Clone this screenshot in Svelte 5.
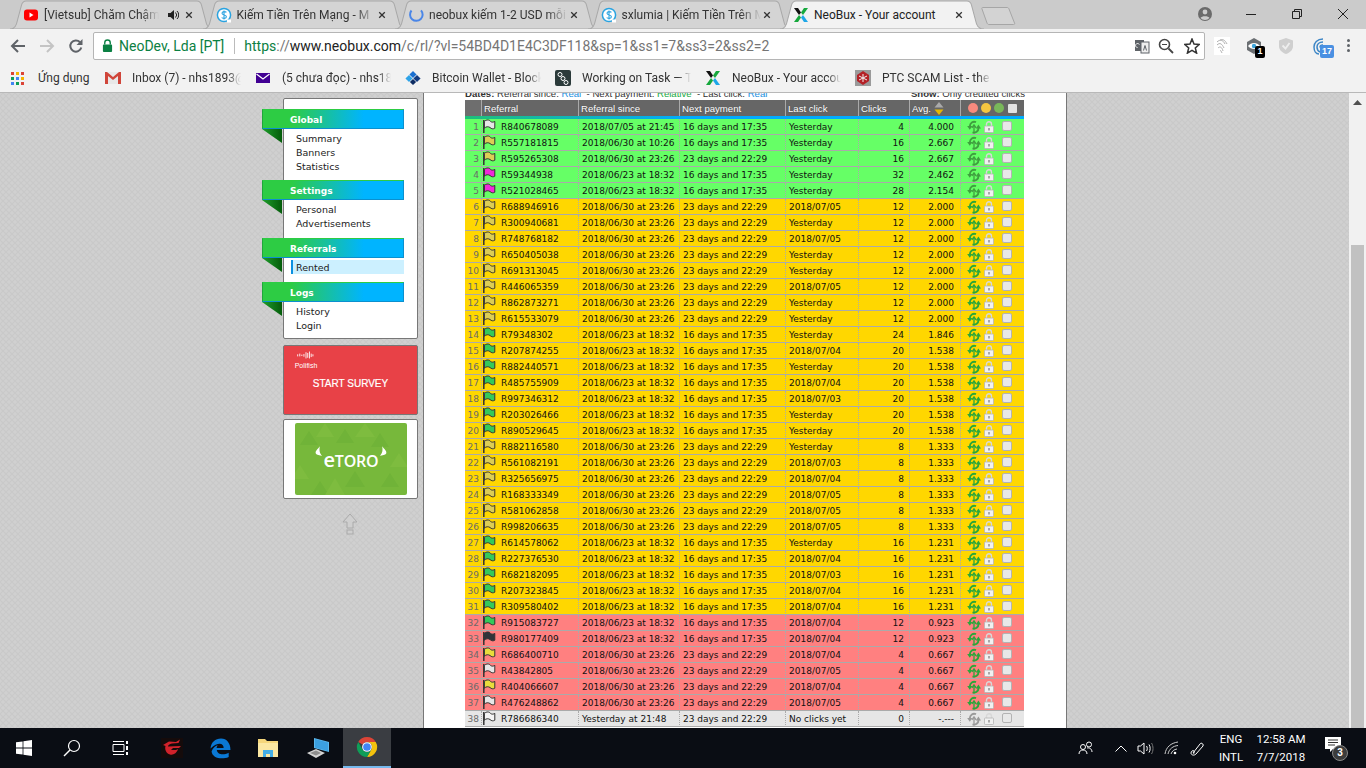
<script>
  const A = ['2018/06/23 at 18:32', '16 days and 17:35'];
  const B = ['2018/06/30 at 23:26', '23 days and 22:29'];
  const Y = 'Yesterday';
  const flagColors = { w: '#e6e6e6', o: '#dccd55', y: '#e8dc3c', m: '#f02ad8', g: '#35c95a', d: '#30343a', n: '#f4f4f4' };
  const raw = [
    ['g','w','R840678089','2018/07/05 at 21:45',A[1],Y,4,'4.000'],
    ['g','o','R557181815','2018/06/30 at 10:26',A[1],Y,16,'2.667'],
    ['g','o','R595265308',B[0],B[1],Y,16,'2.667'],
    ['g','m','R59344938',A[0],A[1],Y,32,'2.462'],
    ['g','m','R521028465',A[0],A[1],Y,28,'2.154'],
    ['a','o','R688946916',B[0],B[1],'2018/07/05',12,'2.000'],
    ['a','o','R300940681',B[0],B[1],Y,12,'2.000'],
    ['a','o','R748768182',B[0],B[1],'2018/07/05',12,'2.000'],
    ['a','o','R650405038',B[0],B[1],Y,12,'2.000'],
    ['a','o','R691313045',B[0],B[1],Y,12,'2.000'],
    ['a','o','R446065359',B[0],B[1],'2018/07/05',12,'2.000'],
    ['a','o','R862873271',B[0],B[1],Y,12,'2.000'],
    ['a','o','R615533079',B[0],B[1],Y,12,'2.000'],
    ['a','g','R79348302',A[0],A[1],Y,24,'1.846'],
    ['a','g','R207874255',A[0],A[1],'2018/07/04',20,'1.538'],
    ['a','g','R882440571',A[0],A[1],Y,20,'1.538'],
    ['a','g','R485755909',A[0],A[1],'2018/07/04',20,'1.538'],
    ['a','g','R997346312',A[0],A[1],'2018/07/03',20,'1.538'],
    ['a','g','R203026466',A[0],A[1],Y,20,'1.538'],
    ['a','g','R890529645',A[0],A[1],Y,20,'1.538'],
    ['a','o','R882116580',B[0],B[1],Y,8,'1.333'],
    ['a','o','R561082191',B[0],B[1],'2018/07/03',8,'1.333'],
    ['a','o','R325656975',B[0],B[1],'2018/07/04',8,'1.333'],
    ['a','o','R168333349',B[0],B[1],'2018/07/05',8,'1.333'],
    ['a','o','R581062858',B[0],B[1],'2018/07/05',8,'1.333'],
    ['a','o','R998206635',B[0],B[1],'2018/07/05',8,'1.333'],
    ['a','g','R614578062',A[0],A[1],Y,16,'1.231'],
    ['a','g','R227376530',A[0],A[1],'2018/07/04',16,'1.231'],
    ['a','g','R682182095',A[0],A[1],'2018/07/03',16,'1.231'],
    ['a','g','R207323845',A[0],A[1],'2018/07/04',16,'1.231'],
    ['a','g','R309580402',A[0],A[1],'2018/07/04',16,'1.231'],
    ['r','g','R915083727',A[0],A[1],'2018/07/04',12,'0.923'],
    ['r','d','R980177409',A[0],A[1],'2018/07/04',12,'0.923'],
    ['r','y','R686400710',B[0],B[1],'2018/07/04',4,'0.667'],
    ['r','w','R43842805',B[0],B[1],'2018/07/05',4,'0.667'],
    ['r','y','R404066607',B[0],B[1],'2018/07/04',4,'0.667'],
    ['r','w','R476248862',B[0],B[1],'2018/07/05',4,'0.667'],
    ['n','n','R786686340','Yesterday at 21:48',B[1],'No clicks yet',0,'-.---']
  ];
  const rows = raw.map((r, i) => ({ n: i + 1, tone: r[0], flag: flagColors[r[1]], ref: r[2], since: r[3], next: r[4], last: r[5], clicks: r[6], avg: r[7] }));
  const sections = [
    { title: 'Global', cls: 'first', items: ['Summary', 'Banners', 'Statistics'] },
    { title: 'Settings', cls: '', items: ['Personal', 'Advertisements'] },
    { title: 'Referrals', cls: '', items: ['Rented'], active: 'Rented' },
    { title: 'Logs', cls: '', items: ['History', 'Login'] }
  ];
  const tabs = [
    { title: '[Vietsub] Chăm Chậm', icon: 'yt', audio: true },
    { title: 'Kiếm Tiền Trên Mạng - M', icon: 's' },
    { title: 'neobux kiếm 1-2 USD mỗi', icon: 'spin' },
    { title: 'sxlumia | Kiếm Tiền Trên M', icon: 's' },
    { title: 'NeoBux - Your account', icon: 'x', active: true }
  ];
  const marks = [
    { t: 'Inbox (7) - nhs1893@gmail', i: 'gm' },
    { t: '(5 chưa đọc) - nhs1893', i: 'ym' },
    { t: 'Bitcoin Wallet - Blockchain', i: 'bc' },
    { t: 'Working on Task — Tasks', i: 'wk' },
    { t: 'NeoBux - Your account', i: 'x' },
    { t: 'PTC SCAM List - the best', i: 'ptc' }
  ];
</script>

{#snippet xlogo()}
  <svg viewBox="0 0 16 16" width="16" height="16"><path d="M1 1h4l3 4.500L6 8 1 1z" fill="#111"/><path d="M15 1h-4L8 5.500 10 8l5-7z" fill="#16a83c"/><path d="M1 15h4l3-4.500L6 8l-5 7z" fill="#16a83c"/><path d="M15 15h-4l-3-4.500L10 8l5 7z" fill="#1ea7e8"/></svg>
{/snippet}
{#snippet sIcon()}
  <svg viewBox="0 0 16 16" width="16" height="16"><circle cx="8" cy="8" r="6.600" fill="#fff" stroke="#2aa3e0" stroke-width="1.500"/><path d="M10.400 5.400C9.600 4.300 6 4.200 6 6.200c0 2.200 4.400 1.300 4.400 3.600 0 2-3.800 1.900-4.700.7M8 3.400v9.200" fill="none" stroke="#2aa3e0" stroke-width="1.100"/><rect x="11" y="12.500" width="4" height="3" fill="#fff"/></svg>
{/snippet}
{#snippet flag(c)}
  <svg class="flag" viewBox="0 0 14 15" width="14" height="15"><path d="M1.800 1v13" stroke="#333" stroke-width="1.500" fill="none"/><path d="M2.400 2.400C4.500 .4 7.500 .6 8.500 2.400 10 3.600 11.500 3.200 12.800 2.400V9.200C11 10.200 9.500 10 8 8.500 6.500 7.400 4 7.400 2.400 9.200Z" fill={c} stroke="#333" stroke-width="1"/></svg>
{/snippet}
{#snippet recycle()}
  <svg class="rec" viewBox="0 0 14 14" width="14" height="14"><path d="M9 2.200C6 .8 3 3 2.800 6.500" fill="none" stroke="currentColor" stroke-width="1.900"/><path d="M.2 6H5.400L2.800 9.800Z" fill="currentColor"/><path d="M5.500 12.400C8.500 13.300 11.500 11.300 11.500 8" fill="none" stroke="currentColor" stroke-width="1.900"/><path d="M8.800 8.400H14L11.400 4.600Z" fill="currentColor"/><path d="M7 13.500V6.500M4.900 7.800 7 4.800 9.100 7.800" fill="none" stroke="currentColor" stroke-width="1.300"/></svg>
{/snippet}
{#snippet lock()}
  <svg class="lk" viewBox="0 0 10 12" width="10" height="12"><path d="M2.500 5V3.200a2.500 2.500 0 0 1 5 0V5" fill="none" stroke="#d8d8d8" stroke-width="1.400"/><rect x=".5" y="5" width="9" height="6.500" rx=".8" fill="#f1f1f1" stroke="#b5b5b5" stroke-width=".8"/><rect x="4.300" y="7" width="1.400" height="2.500" fill="#8a8a8a"/></svg>
{/snippet}
{#snippet chromeIcon()}
  <svg viewBox="0 0 24 24" width="22" height="22"><path d="M12 1a11 11 0 0 1 9.530 5.500H12a5.500 5.500 0 0 0-4.760 2.750L2.470 6.500A11 11 0 0 1 12 1z" fill="#db4437"/><path d="M21.530 6.500A11 11 0 0 1 12 23l4.760-8.250A5.500 5.500 0 0 0 12 6.500z" fill="#f4c20d"/><path d="M12 23A11 11 0 0 1 2.470 6.500l4.770 8.250A5.500 5.500 0 0 0 16.760 14.750z" fill="#0f9d58"/><circle cx="12" cy="12" r="5.300" fill="#fff"/><circle cx="12" cy="12" r="4.200" fill="#4285f4"/></svg>
{/snippet}

<div class="screen">
  <header class="chrome">
    <div class="strip">
      <div class="tabs">
        {#each tabs as tab}
          <div class="tab" class:active={tab.active}>
            <svg class="shape" viewBox="0 0 204 28" preserveAspectRatio="none"><path d="M0 28C4 28 5.500 26 6.500 23L11.500 5C12.300 2.300 13.500 1 16 1H187C189.500 1 190.800 2.300 191.500 5L196.500 23C197.500 26 199 28 204 28Z"/></svg>
            <span class="favicon">
              {#if tab.icon === 'yt'}
                <svg viewBox="0 0 16 16" width="16" height="16"><rect x="1" y="2.500" width="14" height="11" rx="3" fill="#f00"/><path d="M6.500 5.500v5l4-2.500z" fill="#fff"/></svg>
              {:else if tab.icon === 's'}
                {@render sIcon()}
              {:else if tab.icon === 'spin'}
                <svg viewBox="0 0 16 16" width="16" height="16"><path d="M3.500 3.500A6.300 6.300 0 1 0 13 3.300" fill="none" stroke="#4a86e8" stroke-width="2"/></svg>
              {:else}
                {@render xlogo()}
              {/if}
            </span>
            <span class="title">{tab.title}</span>
            {#if tab.audio}
              <svg class="audio" viewBox="0 0 12 12" width="12" height="12"><path d="M1 4h2.500L7 1v10L3.500 8H1z" fill="#222"/><path d="M8.500 3.500a3.500 3.500 0 0 1 0 5M10 2a5.500 5.500 0 0 1 0 8" fill="none" stroke="#222"/></svg>
            {/if}
            <svg class="close" viewBox="0 0 10 10" width="10" height="10"><path d="M1.500 1.500l7 7M8.500 1.500l-7 7" stroke="#333" stroke-width="1.600"/></svg>
          </div>
        {/each}
        <svg class="newtab" viewBox="0 0 36 20" width="36" height="20"><path d="M1.500 1.500H26C27 1.500 27.500 2 28 3L33.500 17C34 18 33.500 18.500 32.500 18.500H8C7 18.500 6.500 18 6 17L1 3C.7 2 1 1.500 1.500 1.500Z" fill="#d3d3d3" stroke="#a6a6a6"/></svg>
      </div>
      <div class="win">
        <svg class="profile" viewBox="0 0 16 16" width="16" height="16"><circle cx="8" cy="8" r="7" fill="#6b6b6b"/><circle cx="8" cy="6" r="2.400" fill="#ccc"/><path d="M3.500 12c1-2.500 8-2.500 9 0a6 6 0 0 1-9 0z" fill="#ccc"/></svg>
        <span class="wbtn"><svg viewBox="0 0 12 12" width="12" height="12"><path d="M1 6.500h10" stroke="#222"/></svg></span>
        <span class="wbtn"><svg viewBox="0 0 12 12" width="12" height="12"><path d="M1.500 3.500h7v7h-7zM3.500 3.500v-2h7v7h-2" fill="none" stroke="#222"/></svg></span>
        <span class="wbtn"><svg viewBox="0 0 12 12" width="12" height="12"><path d="M1 1l10 10M11 1L1 11" stroke="#222"/></svg></span>
      </div>
    </div>

    <div class="toolbar">
      <span class="nav"><svg viewBox="0 0 16 16" width="16" height="16"><path d="M15 8H2M8 2 2 8l6 6" fill="none" stroke="#5f6368" stroke-width="2"/></svg></span>
      <span class="nav"><svg viewBox="0 0 16 16" width="16" height="16"><path d="M1 8h13M8 2l6 6-6 6" fill="none" stroke="#c4c4c4" stroke-width="2"/></svg></span>
      <span class="nav"><svg viewBox="0 0 16 16" width="16" height="16"><path d="M13.300 9.500A5.600 5.600 0 1 1 12 4.200" fill="none" stroke="#5f6368" stroke-width="2"/><path d="M14.500 1v6h-6z" fill="#5f6368"/></svg></span>
      <div class="omni">
        <svg class="padlock" viewBox="0 0 12 14" width="11" height="13"><path d="M3 6V4a3 3 0 0 1 6 0v2" fill="none" stroke="#0b8043" stroke-width="1.500"/><rect x="1" y="6" width="10" height="8" rx="1" fill="#0b8043"/></svg>
        <span class="ev">NeoDev, Lda [PT]</span>
        <span class="bar"></span>
        <span class="url"><span class="ev">https</span><span class="rest">://</span>www.neobux.com<span class="rest">/c/rl/?vl=54BD4D1E4C3DF118&amp;sp=1&amp;ss1=7&amp;ss3=2&amp;ss2=2</span></span>
        <span class="omni-icons">
          <svg class="tr" viewBox="0 0 16 16" width="16" height="16"><rect x="1" y="2" width="9" height="11" fill="#5f6368"/><rect x="7" y="4" width="8" height="11" fill="#eee" stroke="#5f6368"/><path d="M9.500 12.500l1.500-5 1.500 5" fill="none" stroke="#5f6368"/><path d="M3.500 9.500a2 2 0 1 1 1.800-3" fill="none" stroke="#fff"/></svg>
          <svg viewBox="0 0 16 16" width="16" height="16"><circle cx="6.500" cy="6.500" r="5" fill="none" stroke="#444" stroke-width="1.600"/><path d="M10.500 10.500 15 15" stroke="#444" stroke-width="1.800"/><path d="M4 6.500h5" stroke="#444"/></svg>
          <svg viewBox="0 0 16 16" width="16" height="16"><path d="M8 1l2 5 5.300.4-4 3.500 1.300 5.200L8 12.300 3.400 15.100l1.300-5.200-4-3.500L6 6z" fill="none" stroke="#333" stroke-width="1.500"/></svg>
        </span>
      </div>
      <div class="exts">
        <span class="ext"><svg viewBox="0 0 16 18" width="16" height="18"><rect width="16" height="18" fill="#fff"/><path d="M3 5c3-3 6-2 8 2M3 8c3-3 5-1 7 3M4 11c2-2 4-1 5 3M6 14c1-1 1 0 2 2M6 3c3-1 5 0 7 4" fill="none" stroke="#b0b0b0"/></svg></span>
        <span class="ext"><svg viewBox="0 0 18 18" width="18" height="18"><path d="M9 1l7 4v8l-7 4-7-4V5z" fill="#6b6f73"/><path d="M3 9c3-4 9-4 12 0-3 4-9 4-12 0z" fill="#fff"/><circle cx="9" cy="9" r="2.200" fill="#3da4dc"/></svg><b class="badge dark">1</b></span>
        <span class="ext"><svg viewBox="0 0 16 18" width="16" height="18"><path d="M8 1l7 2.500V9c0 4-3 6.500-7 8-4-1.500-7-4-7-8V3.500z" fill="#cfcfcf"/><path d="M4.500 8.500 7.500 11.500 11.500 6" fill="none" stroke="#eee" stroke-width="1.800"/></svg></span>
        <span class="ext wifi"><svg viewBox="0 0 18 18" width="18" height="18"><path d="M11 2C5 2 2 6 2 10s2 7 5 7M11 5C7 5 5 7.500 5 10s1 4 3 5M11 8c-2 0-3 1-3 2.500" fill="none" stroke="#3d86c6" stroke-width="1.500"/></svg><b class="badge blue">17</b></span>
        <span class="ext dots"><i></i><i></i><i></i></span>
      </div>
    </div>

    <nav class="marks">
      <span class="apps">
        <svg viewBox="0 0 13 13" width="13" height="13">
          <rect width="3" height="3" fill="#db4437"/><rect x="5" width="3" height="3" fill="#f4b400"/><rect x="10" width="3" height="3" fill="#db4437"/>
          <rect y="5" width="3" height="3" fill="#0f9d58"/><rect x="5" y="5" width="3" height="3" fill="#4285f4"/><rect x="10" y="5" width="3" height="3" fill="#f4b400"/>
          <rect y="10" width="3" height="3" fill="#4285f4"/><rect x="5" y="10" width="3" height="3" fill="#0f9d58"/><rect x="10" y="10" width="3" height="3" fill="#db4437"/>
        </svg>
        <span>Ứng dụng</span>
      </span>
      {#each marks as m}
        <span class="mark">
          <span class="mi">
            {#if m.i === 'gm'}
              <svg viewBox="0 0 16 14" width="16" height="14"><rect y="1" width="16" height="12" fill="#e8e8e8"/><path d="M0 1v12h3V5l5 4 5-4v8h3V1h-2L8 6 2 1z" fill="#d0453a"/></svg>
            {:else if m.i === 'ym'}
              <svg viewBox="0 0 16 14" width="16" height="14"><rect x="1" y="2" width="14" height="10" fill="#410093"/><path d="M1.500 3 8 8l6.500-5" fill="none" stroke="#fff" stroke-width="1.200"/></svg>
            {:else if m.i === 'bc'}
              <svg viewBox="0 0 18 18" width="18" height="18"><path d="M9 1l4 4-4 4-4-4z" fill="#1a6fd0"/><path d="M13.500 5.500l4 4-4 4-4-4z" fill="#123b80"/><path d="M4.500 5.500l4 4-4 4-4-4z" fill="#2da3e8"/><path d="M9 10l3.500 3.500L9 17l-3.500-3.500z" fill="#0d2c63"/></svg>
            {:else if m.i === 'wk'}
              <svg viewBox="0 0 16 16" width="16" height="16"><rect width="16" height="16" rx="2" fill="#2b3a3a"/><circle cx="5" cy="4.500" r="2" fill="none" stroke="#fff"/><circle cx="8" cy="8.500" r="2" fill="none" stroke="#fff"/><circle cx="11" cy="12.500" r="2" fill="none" stroke="#fff"/></svg>
            {:else if m.i === 'x'}
              {@render xlogo()}
            {:else}
              <svg viewBox="0 0 16 16" width="16" height="16"><rect width="16" height="16" fill="#9a9a9a"/><path d="M8 1l6 4v6l-6 4-6-4V5z" fill="#b42026"/><path d="M8 4v8M4 6l8 4M12 6l-8 4" stroke="#eee"/></svg>
            {/if}
          </span>
          <span class="mt">{m.t}</span>
        </span>
      {/each}
    </nav>
  </header>

  <div class="page">
    <main class="bg">
      <aside class="side">
        <div class="card menu">
          {#each sections as s}
            <section class={s.cls}>
              <h3><span>{s.title}</span></h3>
              <ul>
                {#each s.items as it}
                  <li class:on={it === s.active}>{it}</li>
                {/each}
              </ul>
            </section>
          {/each}
        </div>
        <div class="card survey">
          <div class="poli">
            <svg viewBox="0 0 26 10" width="18" height="8"><path d="M1 4v3M4 3v4M7 4.500v2M10 3.500v4M13 1v9M15.500 2v7M18 0v10M20.500 3v5M23 4v3" stroke="#fff" stroke-width="1.400" opacity=".9"/></svg>
            <span>Polifish</span>
          </div>
          <div class="start">START SURVEY</div>
        </div>
        <div class="card ad">
          <div class="etoro">
            <svg class="tri" viewBox="0 0 112 72" preserveAspectRatio="none"><g fill="#70b338"><path d="M14 8l9 14H5zM50 6l9 14H41zM85 10l9 14H76zM25 58l9 14H16zM60 48l10 16H50zM95 50l9 14H86z"/></g><g fill="#7ebc3f"><path d="M30 0l9 14H21zM70 0l10 14H60zM5 42l9 14H-4zM104 30l9 14H95zM40 55l10 17H30z"/></g></svg>
            <svg class="horn l" viewBox="0 0 10 12" width="8" height="12"><path d="M6 0C3 4 0 6 1 9c1 2 5 2 8 3-3-3-4-6-3-12z" fill="#fff"/></svg>
            <span class="elogo"><span class="lc">e</span>toro</span>
            <svg class="horn r" viewBox="0 0 10 12" width="8" height="12"><path d="M4 0c3 4 6 6 5 9-1 2-5 2-8 3 3-3 4-6 3-12z" fill="#fff"/></svg>
          </div>
        </div>
        <svg class="up" viewBox="0 0 16 22" width="16" height="22"><path d="M8 1 15 9h-4v6H5V9H1z" fill="#cfcfcf" stroke="#aaa"/><rect x="5" y="17" width="6" height="4" fill="#cfcfcf" stroke="#aaa"/></svg>
      </aside>

      <div class="panel">
        <div class="opts">
          <span><b>Dates:</b> Referral since: <em>Real</em> &nbsp;- Next payment: <em class="gr">Relative</em> &nbsp;- Last click: <em>Real</em></span>
          <span class="show"><b>Show:</b> Only credited clicks</span>
        </div>
        <table>
          <colgroup>
            <col class="c1"/><col class="c2"/><col class="c3"/><col class="c4"/><col class="c5"/><col class="c6"/><col class="c7"/><col class="c8"/><col class="c9"/>
          </colgroup>
          <thead>
            <tr>
              <th></th>
              <th colspan="2">Referral</th>
              <th>Referral since</th>
              <th>Next payment</th>
              <th>Last click</th>
              <th>Clicks</th>
              <th class="avg">Avg.
                <svg viewBox="0 0 10 13" width="10" height="13"><path d="M5 0l4.500 5.500H.5z" fill="#aaa"/><path d="M5 13 .5 7.500h9z" fill="#e6b800"/></svg>
              </th>
              <th class="ctl"><span class="dots3"><i class="c-r"></i><i class="c-y"></i><i class="c-g"></i><i class="c-s"></i></span></th>
            </tr>
            <tr class="rule"><td colspan="9"></td></tr>
          </thead>
          <tbody>
            {#each rows as r}
              <tr class="t-{r.tone}">
                <td class="num">{r.n}</td>
                <td class="fl">{@render flag(r.flag)}</td>
                <td class="ref">{r.ref}</td>
                <td>{r.since}</td>
                <td>{r.next}</td>
                <td>{r.last}</td>
                <td class="right">{r.clicks}</td>
                <td class="right avg-c">{r.avg}</td>
                <td class="act"><span class="acts">{@render recycle()}{@render lock()}<i class="box"></i></span></td>
              </tr>
            {/each}
          </tbody>
        </table>
      </div>
    </main>
    <div class="scroll">
      <svg viewBox="0 0 9 5" width="9" height="5"><path d="M4.500 0 9 5H0z" fill="#505050"/></svg>
      <div class="thumb"></div>
    </div>
  </div>

  <footer class="taskbar">
    <span class="tb"><svg viewBox="0 0 16 16" width="16" height="16"><path d="M0 2.300 6.600 1.400V7.600H0zM7.400 1.300 16 0V7.600H7.400zM0 8.400H6.600V14.600L0 13.700zM7.400 8.400H16V16L7.400 14.700z" fill="#fff"/></svg></span>
    <span class="tb"><svg viewBox="0 0 18 18" width="18" height="18"><circle cx="11" cy="7" r="5.500" fill="none" stroke="#fff" stroke-width="1.200"/><path d="M7 11 1 17" stroke="#fff" stroke-width="1.400"/></svg></span>
    <span class="tb"><svg viewBox="0 0 17 16" width="17" height="16"><path d="M1 4.500h11v7H1zM1 1.500h11M1 14.500h11" fill="none" stroke="#fff"/><path d="M14 1h2v3h-2zM14 6h2v4h-2zM14 12h2v3h-2z" fill="#fff"/></svg></span>
    <span class="tb gap"><svg viewBox="0 0 22 20" width="22" height="20"><rect width="22" height="20" fill="#150b0b"/><path d="M2 7 8 3.500 15 4 19 1.500 17.500 5 11 5.500C8.500 6 7 7 7 8.500L20 8 18 10H12L10 12 15 12 17 11C16 15 12 17.500 9 16.500 5 15.500 3.500 11 4.500 8Z" fill="#d2222b"/></svg></span>
    <span class="tb"><svg viewBox="0 0 20 20" width="21" height="21"><path d="M.5 10C1 4 5 .5 10.500 .5 16 .5 19.500 5 19.500 11.500H6.500C6.800 15.500 12.500 17 17.800 14V18C11 21 2 19 1.500 12.500 3 9 5.500 7.500 7.500 7 6.500 8.200 6.300 9 6.300 9.500H13C13 5 8 3 .5 10z" fill="#0a78d4"/></svg></span>
    <span class="tb"><svg viewBox="0 0 22 20" width="22" height="20"><path d="M1 1h7l2 2h11v16H1z" fill="#f5d67b"/><path d="M1 5h20v14H1z" fill="#fbe7a2"/><path d="M6 12h10v7h-3v-3H9v3H6z" fill="#45aee6"/></svg></span>
    <span class="tb gap2"><svg viewBox="0 0 23 20" width="23" height="20"><path d="M7 0 22 4V14L7 10z" fill="#5db9ee"/><path d="M8 1 21 4.500V13L8 9.600z" fill="#3ca0e0"/><path d="M0 15 9 11 18 15 9 20z" fill="#d4d4d4"/><path d="M3 15 9 12.500 14 15 9 17.500z" fill="#8e8e8e"/></svg></span>
    <span class="tb run">{@render chromeIcon()}</span>
    <div class="tray">
      <svg class="ti t1" viewBox="0 0 16 14" width="16" height="14"><circle cx="5" cy="6" r="2.500" fill="none" stroke="#fff"/><path d="M1 13c0-3 2-4 4-4s4 1 4 4" fill="none" stroke="#fff"/><circle cx="11" cy="3.500" r="2.500" fill="none" stroke="#fff"/><path d="M9 7c2-.5 5 .5 5 4" fill="none" stroke="#fff"/></svg>
      <svg class="ti t2" viewBox="0 0 12 7" width="12" height="7"><path d="M.5 6.500 6 1l5.500 5.500" fill="none" stroke="#fff"/></svg>
      <svg class="ti t3" viewBox="0 0 17 13" width="17" height="13"><path d="M1 4h2.500L7 1v11L3.500 9H1z" fill="none" stroke="#fff"/><path d="M9.500 4c1 1 1 4 0 5M12 2.500c1.500 2 1.500 6 0 8" fill="none" stroke="#fff"/><path d="M14.500 1c2 3 2 8 0 11" fill="none" stroke="#777"/></svg>
      <svg class="ti t4" viewBox="0 0 15 14" width="15" height="14"><path d="M1 13C2 6 7 2 14 1M4 13C5 8 9 5 14 4.500M7 13C8 10 10 8.500 13 8" fill="none" stroke="#ccc"/><circle cx="11" cy="12" r="1.300" fill="#fff"/></svg>
      <svg class="ti t5" viewBox="0 0 15 15" width="15" height="15"><path d="M4 12 11 3c1-2 4 0 3 2L7 13c-2 2-5 1-5-1s2-3 3-2-1 3 0 3" fill="none" stroke="#fff"/></svg>
      <span class="lang">ENG<br/>INTL</span>
      <span class="clock">12:58 AM<br/>7/7/2018</span>
      <span class="note">
        <svg viewBox="0 0 16 15" width="16" height="15"><path d="M0 0h16v12H8l-3 3v-3H0z" fill="#fff"/><path d="M3 3h10M3 5.500h10M3 8h7" stroke="#333"/></svg>
        <b>3</b>
      </span>
    </div>
  </footer>
</div>

<style>
  :global(body) { margin: 0; background: #000; }
  .screen { width: 1366px; height: 768px; display: flex; flex-direction: column; overflow: hidden; font-family: Roboto, "Noto Sans", sans-serif; }
  .chrome { flex: 0 0 93px; background: #f2f2f2; display: flex; flex-direction: column; border-bottom: 1px solid #b8b8b8; box-sizing: border-box; }

  .strip { height: 29px; background: #cbcbcb; display: flex; position: relative; }
  .tabs { display: flex; padding-left: 10px; flex: 1; align-items: flex-start; }
  .tab { width: 204px; height: 29px; margin-right: -11.5px; position: relative; display: flex; align-items: center; padding: 0 21px 0 13px; box-sizing: border-box; font-size: 12px; color: #333; }
  .tab .shape { position: absolute; inset: 0; width: 100%; height: 29px; }
  .shape path { fill: #d4d4d4; stroke: #a8a8a8; stroke-width: 1; }
  .tab.active { z-index: 2; color: #222; }
  .tab.active .shape path { fill: #f2f2f2; }
  .favicon, .title, .audio, .close { position: relative; }
  .favicon { width: 16px; height: 16px; margin-right: 5px; flex: none; }
  .title { flex: 1; min-width: 0; white-space: nowrap; overflow: hidden; -webkit-mask-image: linear-gradient(90deg, #000 85%, transparent); mask-image: linear-gradient(90deg, #000 85%, transparent); }
  .tab.active .title { -webkit-mask-image: none; mask-image: none; }
  .audio { flex: none; margin: 0 4px 0 8px; }
  .close { flex: none; margin-left: 2px; width: 8px; height: 8px; }
  .newtab { margin: 6px 0 0 8px; flex: none; }
  .win { display: flex; align-items: center; height: 28px; flex: none; }
  .profile { margin-right: 15px; }
  .wbtn { width: 46px; display: flex; justify-content: center; }

  .toolbar { height: 33px; display: flex; align-items: center; padding-left: 3px; box-sizing: border-box; }
  .nav { width: 29px; display: flex; justify-content: center; flex: none; }
  .omni { width: 1112px; margin-left: 3px; box-sizing: border-box; height: 28px; background: #fff; border: 1px solid #b5b5b5; border-radius: 2px; display: flex; align-items: center; padding-left: 8px; font-size: 14px; white-space: nowrap; color: #222; flex: none; }
  .padlock { margin-right: 6px; flex: none; }
  .ev { color: #0b8043; }
  .bar { width: 1px; height: 16px; background: #bbb; margin: 0 9px 0 10px; flex: none; }
  .url { flex: 1; }
  .rest { color: #757575; }
  .omni-icons { display: flex; gap: 10px; padding-right: 4px; }
  .omni-icons .tr { margin-right: -2px; }
  .exts { display: flex; align-items: center; margin-left: 1px; }
  .ext { width: 32px; display: flex; justify-content: center; position: relative; }
  .wifi { margin-left: 3px; }
  .dots { width: 22px; flex-direction: column; align-items: center; gap: 2px; }
  .dots i { width: 3px; height: 3px; border-radius: 50%; background: #5f6368; }
  .badge { position: absolute; font: bold 9px/11px "Liberation Sans", sans-serif; color: #fff; border-radius: 2px; text-align: center; }
  .badge.dark { left: 17px; top: 9px; background: #000; width: 10px; height: 12px; }
  .badge.blue { left: 15px; top: 8px; background: #4a90e2; width: 14px; height: 13px; line-height: 13px; }

  .marks { flex: 1; display: flex; align-items: center; padding: 2px 0 0 11px; font-size: 12px; color: #333; white-space: nowrap; box-sizing: border-box; }
  .apps { display: flex; align-items: center; gap: 14px; width: 94px; flex: none; }
  .mark { display: flex; align-items: center; width: 150px; flex: none; }
  .mi { width: 16px; height: 16px; margin-right: 11px; display: flex; align-items: center; flex: none; }
  .mt { width: 109px; overflow: hidden; -webkit-mask-image: linear-gradient(90deg, #000 88%, transparent); mask-image: linear-gradient(90deg, #000 88%, transparent); }

  .page { flex: 1; display: flex; min-height: 0; }
  .bg { flex: 1; display: flex; padding-left: 262px; overflow: hidden; background-color: #c9c9c9; background-image: radial-gradient(circle, #d0d0d0 1.4px, transparent 1.9px), radial-gradient(circle, #d0d0d0 1.4px, transparent 1.9px); background-size: 6px 6px; background-position: 0 0, 3px 3px; }
  .scroll { width: 17px; background: #f1f1f1; display: flex; flex-direction: column; align-items: center; padding-top: 7px; box-sizing: border-box; }
  .thumb { width: 13px; flex: 1; margin-top: 140px; background: #c1c1c1; }

  .side { width: 161px; flex: none; display: flex; flex-direction: column; padding-top: 5px; box-sizing: border-box; }
  .card { margin-left: 21px; width: 135px; box-sizing: border-box; border: 1px solid #777; border-radius: 2px; background: #fff; font-family: "DejaVu Sans", sans-serif; }
  .menu { height: 241px; padding-top: 10px; }
  section { margin-bottom: 8px; }
  section.first { margin-bottom: 7px; }
  h3 { margin: 0 0 0 -22px; width: 142px; height: 20px; box-sizing: border-box; position: relative; background: linear-gradient(90deg, #2dcc44 0%, #2dcc44 20%, #00b4ff 72%); border: 1px solid; border-color: #2dcc44 #0b90cf #0b90cf #1fa83a; display: flex; align-items: center; padding: 1px 0 0 27px; color: #fff; font-size: 9px; font-weight: bold; }
  h3::after { content: ""; position: absolute; left: -1px; top: 19px; width: 20px; height: 14px; background: linear-gradient(90deg, #1f9e2c, #045c0a); clip-path: polygon(0 0, 100% 0, 100% 100%); }
  ul { list-style: none; margin: 2px 0 0; padding: 0 13px 0 7px; font-size: 9.5px; line-height: 14px; color: #222; }
  li { height: 14px; padding: 1px 0 0 5px; box-sizing: border-box; }
  li.on { background: #ccf0ff; border-left: 2px solid #0b90e0; padding-left: 3px; }
  .survey { margin-top: 6px; height: 70px; background: #e84147; color: #fff; font-family: "Liberation Sans", sans-serif; }
  .poli { display: flex; flex-direction: column; align-items: center; gap: 2px; width: 36px; margin-left: 4px; padding-top: 5px; font-size: 7px; line-height: 9px; }
  .start { text-align: center; font-size: 10px; line-height: 12px; margin-top: 8px; -webkit-text-stroke: .2px #fff; }
  .ad { margin-top: 4px; height: 80px; padding: 3px 10px 0 11px; }
  .etoro { height: 72px; border-radius: 2px; background: #77b83b; display: flex; align-items: center; justify-content: center; gap: 1px; position: relative; overflow: hidden; }
  .tri { position: absolute; inset: 0; width: 100%; height: 100%; }
  .elogo { position: relative; color: #fff; font: 600 23px/1 "Open Sans", sans-serif; font-variant: small-caps; letter-spacing: -.2px; margin-top: -1px; }
  .lc { font-variant: normal; font-size: 20px; }
  .horn { position: relative; align-self: center; margin-top: -16px; }
  .up { margin: 14px 0 0 80px; }

  .panel { width: 644px; height: 100%; flex: none; box-sizing: border-box; background: #fff; border-left: 1px solid #777; border-right: 1px solid #777; padding: 0 41px; overflow: hidden; font-family: "DejaVu Sans", sans-serif; }
  .opts { height: 7px; display: flex; justify-content: space-between; font: 9.6px/1px "Liberation Sans", sans-serif; color: #333; white-space: nowrap; }
  .opts em { font-style: normal; color: #1a8fe0; }
  .opts em.gr { color: #22aa44; }
  table { width: 559px; table-layout: fixed; border-collapse: separate; border-spacing: 0; font-size: 9px; }
  .c1 { width: 16px; } .c2 { width: 16px; } .c3 { width: 81px; } .c4 { width: 101px; } .c5 { width: 106px; } .c6 { width: 73px; } .c7 { width: 51px; } .c8 { width: 51px; } .c9 { width: 64px; }
  th { height: 16px; padding: 0 0 0 2px; box-sizing: border-box; background: #666; color: #fff; font: normal 9.6px "Liberation Sans", sans-serif; text-align: left; border-left: 1px solid #a9a9a9; white-space: nowrap; overflow: hidden; text-shadow: 0 0 1px #444; }
  th:first-child { border-left: 0; background: #6e6e6e; }
  th.avg { padding-right: 0; }
  th.avg svg { vertical-align: -3px; }
  .ctl { padding: 0; }
  .dots3 { display: flex; align-items: center; gap: 3px; padding-left: 7px; }
  .dots3 i { width: 10px; height: 10px; border-radius: 50%; }
  .c-r { background: #f88a7e; } .c-y { background: #f5c640; } .c-g { background: #79b75a; }
  .dots3 .c-s { width: 9px; height: 9px; border-radius: 1px; background: #e2e2e2; margin-left: 1px; }
  .rule td { height: 3px; padding: 0; font-size: 0; line-height: 0; background: linear-gradient(90deg, #1dc07a, #00aaff 40%); }
  tbody td { height: 16px; padding: 1px 0 0 3px; box-sizing: border-box; white-space: nowrap; overflow: hidden; color: #111; border-left: 1px dotted #aaa; border-bottom: 1px solid #aaa; line-height: 14px; }
  tbody td:first-child { border-left: 0; }
  tbody td.num { color: #6a6a6a; text-align: right; padding: 1px 2px 0 0; }
  tbody td.fl { padding: 0; }
  .fl .flag { display: block; }
  tbody td.ref { border-left: 0; padding-left: 4px; }
  tbody td.right { text-align: right; padding: 1px 5px 0 0; }
  tbody td.avg-c { padding: 1px 6px 0 0; }
  tbody td.act { padding: 0; }
  .acts { display: flex; align-items: center; padding-left: 6px; height: 15px; color: #2aa63a; }
  .lk { margin-left: 3px; margin-right: 1px; }
  .box { width: 10px; height: 10px; margin: -2px 0 0 7px; border: 1px solid #b3b3b3; border-radius: 2px; background: #e8e8e8; box-sizing: border-box; }
  .t-g td { background: #66ff66; }
  .t-a td { background: #ffd700; }
  .t-r td { background: #ff8080; }
  .t-n td { background: #e6e6e6; }
  .t-g .acts { color: #3f9f3f; }
  .t-n .acts { color: #9a9a9a; }

  .taskbar { flex: 0 0 40px; background: #0a0d14; display: flex; color: #fff; }
  .tb { width: 48px; height: 40px; display: flex; align-items: center; justify-content: center; flex: none; box-sizing: border-box; }
  .gap { margin-left: 4px; }
  .gap2 { margin-left: 2px; }
  .run { margin-left: 1px; background: #3a3d42; border-bottom: 2px solid #76b9ed; }
  .tray { flex: 1; display: flex; align-items: center; font-size: 11.5px; position: relative; }
  .ti { flex: none; }
  .t1 { margin-left: 687px; }
  .t2 { margin-left: 21px; }
  .t3 { margin-left: 10px; }
  .t4 { margin-left: 10px; }
  .t5 { margin-left: 10px; }
  .lang { margin-left: 14px; width: 26px; text-align: center; line-height: 18px; flex: none; }
  .clock { margin-left: 12px; width: 50px; text-align: center; line-height: 18px; flex: none; white-space: nowrap; margin-top: -1px; }
  .note { margin-left: 19px; position: relative; width: 16px; height: 15px; flex: none; margin-top: -8px; }
  .note svg { display: block; }
  .note b { position: absolute; left: 7px; top: 8px; width: 16px; height: 16px; border-radius: 50%; background: #3c3c3c; border: 1px solid #888; box-sizing: border-box; font: bold 10px/14px "Liberation Sans", sans-serif; text-align: center; }
</style>
